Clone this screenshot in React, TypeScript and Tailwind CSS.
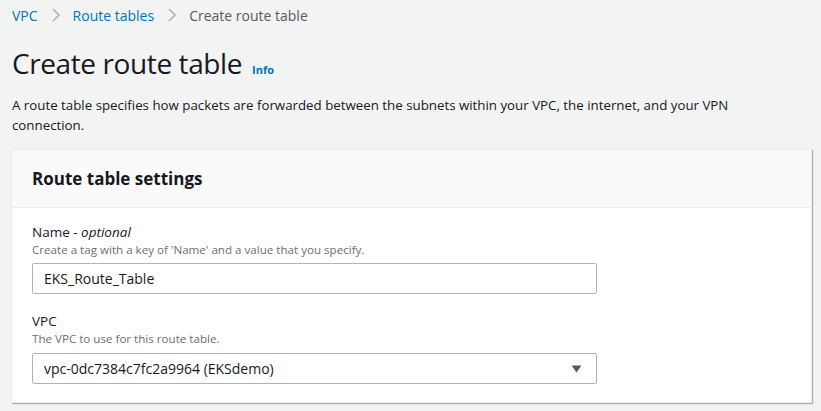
import React from "react";

export default function App() {
  return (
    <div
      className="w-[821px] h-[411px] overflow-hidden bg-[#f2f3f3] text-[#16191f]"
      style={{ fontFamily: '"Open Sans", "Noto Sans", Arial, sans-serif' }}
    >
      <div className="px-3">
        <nav className="flex items-center h-[30px] text-[14px]">
          <span className="text-[#0073bb]">VPC</span>
          <svg className="ml-[13px] mr-[12px]" width="10" height="16" viewBox="0 0 10 16">
            <path d="M2 2 L8 8 L2 14" fill="none" stroke="#aab7b8" strokeWidth="1.6" />
          </svg>
          <span className="text-[#0073bb]">Route tables</span>
          <svg className="ml-[13px] mr-[12px]" width="10" height="16" viewBox="0 0 10 16">
            <path d="M2 2 L8 8 L2 14" fill="none" stroke="#aab7b8" strokeWidth="1.6" />
          </svg>
          <span className="text-[#545b64]">Create route table</span>
        </nav>
        <div className="flex items-baseline mt-[15px]">
          <h1 className="text-[28px] leading-[36px] tracking-[-0.4px]">Create route table</h1>
          <span className="ml-[10px] text-[11px] font-bold text-[#0073bb]">Info</span>
        </div>
        <p className="mt-[14px] text-[13.3px] leading-[20px] pr-[60px]">
          A route table specifies how packets are forwarded between the subnets within your VPC, the internet, and your VPN connection.
        </p>
      </div>
      <div className="ml-[11px] mr-[9px] mt-[14px] bg-white border border-[#eaeded] shadow-[1px_1px_1px_rgba(0,28,36,0.3)]">
        <div className="h-[58px] bg-[#fafafa] border-b border-[#eaeded] flex items-center px-[20px]">
          <h2 className="text-[17px] font-bold">Route table settings</h2>
        </div>
        <div className="px-[20px] pt-[14px] pb-[18px]">
          <div className="text-[13.5px] leading-[20px]">
            Name - <i>optional</i>
          </div>
          <div className="text-[11.6px] leading-[16px] text-[#687078]">
            Create a tag with a key of 'Name' and a value that you specify.
          </div>
          <div className="mt-[5px] w-[565px] h-[31px] border border-[#aab7b8] rounded-[2px] flex items-center px-[11px] text-[14px]">
            EKS_Route_Table
          </div>
          <div className="mt-[17px] text-[13.5px] leading-[20px]">VPC</div>
          <div className="text-[11.6px] leading-[16px] text-[#687078]">The VPC to use for this route table.</div>
          <div className="mt-[6px] w-[565px] h-[31px] border border-[#aab7b8] rounded-[2px] flex items-center justify-between px-[11px] text-[14px]">
            <span>vpc-0dc7384c7fc2a9964 (EKSdemo)</span>
            <svg width="11" height="8" viewBox="0 0 11 8" className="mr-[3px]">
              <path d="M0.5 0.5 H10.5 L5.5 7.5 Z" fill="#545b64" />
            </svg>
          </div>
        </div>
      </div>
    </div>
  );
}
